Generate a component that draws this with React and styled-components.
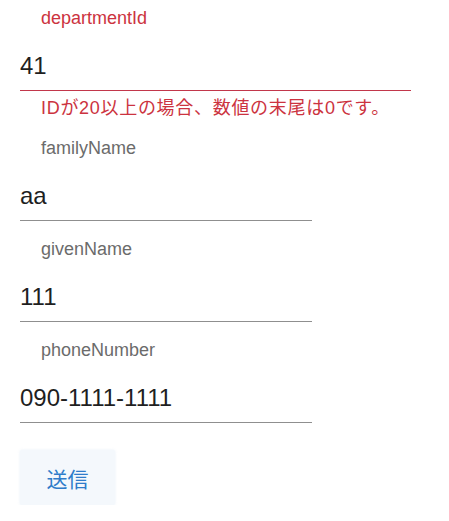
import React from "react";
import styled, { createGlobalStyle } from "styled-components";

const Global = createGlobalStyle`
  html, body { margin: 0; padding: 0; background: #ffffff; }
  body { font-family: "Liberation Sans", Arial, "Noto Sans CJK JP", sans-serif; }
  * { box-sizing: border-box; }
`;

const Form = styled.form`
  display: flex;
  flex-direction: column;
  align-items: flex-start;
  padding: 6px 0 0 20px;
`;

const Field = styled.div`
  display: flex;
  flex-direction: column;
  width: ${(p) => p.$width}px;
  margin-bottom: 16px;
`;

const Label = styled.label`
  display: block;
  height: 24px;
  line-height: 24px;
  padding-left: 21px;
  font-size: 18px;
  color: ${(p) => (p.$error ? "#cc3340" : "#6b6b6b")};
  margin-bottom: 21px;
`;

const Input = styled.input`
  display: block;
  width: 100%;
  height: 40px;
  margin: 0;
  padding: 0 0 9px 0;
  border: none;
  border-bottom: 1px solid ${(p) => (p.$error ? "#c2374b" : "#8f8f8f")};
  outline: none;
  background: transparent;
  font-family: "Liberation Sans", Arial, "Noto Sans CJK JP", sans-serif;
  font-size: 24px;
  line-height: 30px;
  color: #1f1f1f;
`;

const ErrorText = styled.div`
  margin-top: 5px;
  height: 24px;
  line-height: 24px;
  padding-left: 21px;
  font-size: 18px;
  letter-spacing: 0.7px;
  color: #cc3340;
  white-space: nowrap;
`;

const Button = styled.button`
  margin-top: 11px;
  width: 95px;
  height: 55px;
  border: none;
  border-radius: 2px;
  background: #f4f8fc;
  box-shadow: 0 0 3px rgba(220, 232, 245, 0.6);
  color: #2f7cca;
  font-family: "Liberation Sans", Arial, "Noto Sans CJK JP", sans-serif;
  font-size: 21px;
  cursor: pointer;
  padding: 0;
`;

const fields = [
  { name: "departmentId", value: "41", width: 391, error: "IDが20以上の場合、数値の末尾は0です。" },
  { name: "familyName", value: "aa", width: 292 },
  { name: "givenName", value: "111", width: 292 },
  { name: "phoneNumber", value: "090-1111-1111", width: 292 },
];

export default function App() {
  return (
    <>
      <Global />
      <Form onSubmit={(e) => e.preventDefault()}>
        {fields.map((f) => (
          <Field key={f.name} $width={f.width}>
            <Label $error={!!f.error} htmlFor={f.name}>{f.name}</Label>
            <Input id={f.name} defaultValue={f.value} $error={!!f.error} />
            {f.error && <ErrorText>{f.error}</ErrorText>}
          </Field>
        ))}
        <Button type="submit">送信</Button>
      </Form>
    </>
  );
}
